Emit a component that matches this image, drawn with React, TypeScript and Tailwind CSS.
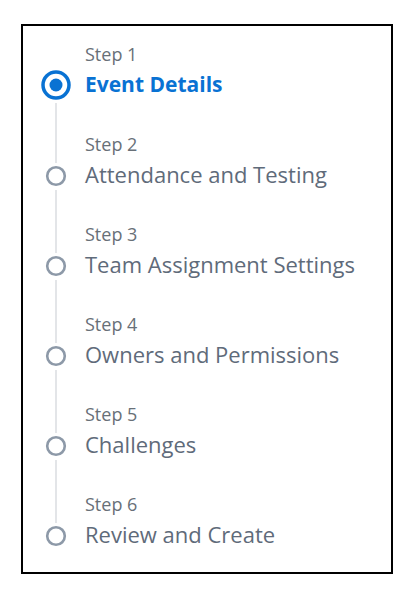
const steps = [
  "Event Details",
  "Attendance and Testing",
  "Team Assignment Settings",
  "Owners and Permissions",
  "Challenges",
  "Review and Create",
];

function StepIcon({ active }: { active: boolean }) {
  if (active) {
    return (
      <svg width="30" height="30" viewBox="0 0 30 30">
        <circle cx="15" cy="15" r="13" fill="none" stroke="#0972d3" strokeWidth="3.5" />
        <circle cx="15" cy="15" r="6.5" fill="#0972d3" />
      </svg>
    );
  }
  return (
    <svg width="22" height="22" viewBox="0 0 22 22">
      <circle cx="11" cy="11" r="8.8" fill="none" stroke="#8d99a8" strokeWidth="2.6" />
    </svg>
  );
}

export default function App() {
  return (
    <div className="min-h-screen bg-white pt-[24px] pl-[21px]" style={{ fontFamily: '"Open Sans", sans-serif' }}>
      <div className="w-[372px] h-[550px] border-2 border-black pt-[19px] pl-[18px]">
        <ol className="grid grid-cols-[30px_1fr] gap-x-[14px]">
          {steps.map((title, i) => {
            const active = i === 0;
            const last = i === steps.length - 1;
            return (
              <li key={title} className="contents">
                {/* label row */}
                <div className="h-[24px] flex justify-center">
                  {i > 0 && <div className="w-[2px] h-full bg-[#e3e5e8]" />}
                </div>
                <div className="h-[24px] leading-[18px] text-[18px] text-[#687078]">Step {i + 1}</div>

                {/* title row */}
                <div className="h-[34px] flex flex-col items-center">
                  <div className={i > 0 ? "w-[2px] h-[4px] bg-[#e3e5e8]" : "h-[1px]"} />
                  <div className={(active ? "h-[30px]" : "h-[22px] mt-[2px]") + " flex items-center justify-center"}>
                    <StepIcon active={active} />
                  </div>
                  {!last && <div className="w-[2px] flex-1 mt-[3px] bg-[#e3e5e8]" />}
                </div>
                <div
                  className={
                    "h-[34px] leading-[30px] " +
                    (active ? "text-[21px] font-bold text-[#0972d3]" : "text-[22px] text-[#5f6b7a]")
                  }
                >
                  {title}
                </div>

                {/* spacer row */}
                {!last && (
                  <>
                    <div className="h-[32px] flex justify-center">
                      <div className="w-[2px] h-full bg-[#e3e5e8]" />
                    </div>
                    <div className="h-[32px]" />
                  </>
                )}
              </li>
            );
          })}
        </ol>
      </div>
    </div>
  );
}
